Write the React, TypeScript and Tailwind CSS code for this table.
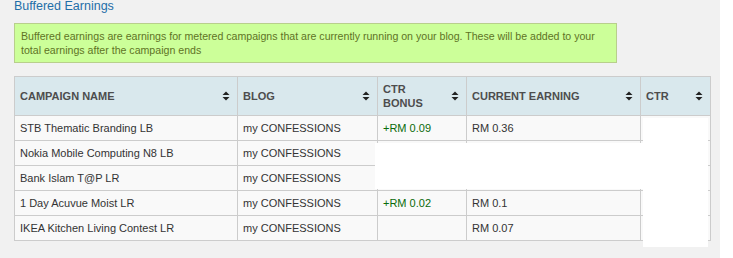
import React from "react"

const rows = [
  { name: "STB Thematic Branding LB", blog: "my CONFESSIONS", bonus: "+RM 0.09", earning: "RM 0.36" },
  { name: "Nokia Mobile Computing N8 LB", blog: "my CONFESSIONS", bonus: "", earning: "" },
  { name: "Bank Islam T@P LR", blog: "my CONFESSIONS", bonus: "", earning: "" },
  { name: "1 Day Acuvue Moist LR", blog: "my CONFESSIONS", bonus: "+RM 0.02", earning: "RM 0.1" },
  { name: "IKEA Kitchen Living Contest LR", blog: "my CONFESSIONS", bonus: "", earning: "RM 0.07" },
]

function SortIcon() {
  return (
    <svg width="8" height="10" viewBox="0 0 8 10" className="shrink-0">
      <path d="M4 0.5 L7.5 4 L0.5 4 Z" fill="#222" />
      <path d="M4 9.5 L7.5 6 L0.5 6 Z" fill="#222" />
    </svg>
  )
}

function Th({ children, width }: { children: React.ReactNode; width: string }) {
  return (
    <th className={`${width} h-[39px] border border-[#cccccc] bg-[#d9e8ed] px-[5px] text-left align-middle`}>
      <div className="flex items-center justify-between pr-[2px] text-[11px] font-bold leading-[14px] text-[#4d4d4d]">
        <span>{children}</span>
        <SortIcon />
      </div>
    </th>
  )
}

export default function App() {
  return (
    <div className="flex h-[258px] w-[733px] bg-white font-['Liberation_Sans',Arial,sans-serif]">
      <div className="h-full w-[720px] bg-[#f1f1f1] pl-[14px]">
        <h2 className="-mt-[2px] text-[12.5px] leading-[16px] text-[#1f6ea8]">Buffered Earnings</h2>
        <div className="mt-[9px] w-[603px] border border-[#b8cf8c] bg-[#ccff99] px-[6px] py-[5px] text-[10.6px] leading-[14px] text-[#5f7325]">
          Buffered earnings are earnings for metered campaigns that are currently running on your blog. These will be added to your total earnings after the campaign ends
        </div>
        <div className="relative mt-[13px] w-[696px]">
          <table className="w-[696px] table-fixed border-collapse border border-[#cccccc]">
            <thead>
              <tr>
                <Th width="w-[223px]">CAMPAIGN NAME</Th>
                <Th width="w-[140px]">BLOG</Th>
                <Th width="w-[89px]">CTR<br />BONUS</Th>
                <Th width="w-[174px]">CURRENT EARNING</Th>
                <Th width="w-[70px]">CTR</Th>
              </tr>
            </thead>
            <tbody>
              {rows.map((r) => (
                <tr key={r.name} className="h-[25px] bg-[#f9f9f9] text-[11px] text-[#333333]">
                  <td className="border border-[#cccccc] px-[5px]">{r.name}</td>
                  <td className="border border-[#cccccc] px-[5px]">{r.blog}</td>
                  <td className="border border-[#cccccc] px-[5px] text-[#0a6b0a]">{r.bonus}</td>
                  <td className="border border-[#cccccc] px-[5px]">{r.earning}</td>
                  <td className="border border-[#cccccc] px-[5px]"></td>
                </tr>
              ))}
            </tbody>
          </table>
          {/* unrendered patches */}
          <div className="absolute left-[361px] top-[67px] h-[46px] w-[268px] bg-white" />
          <div className="absolute left-[629px] top-[42px] h-[129px] w-[65px] bg-white" />
        </div>
      </div>
    </div>
  )
}
